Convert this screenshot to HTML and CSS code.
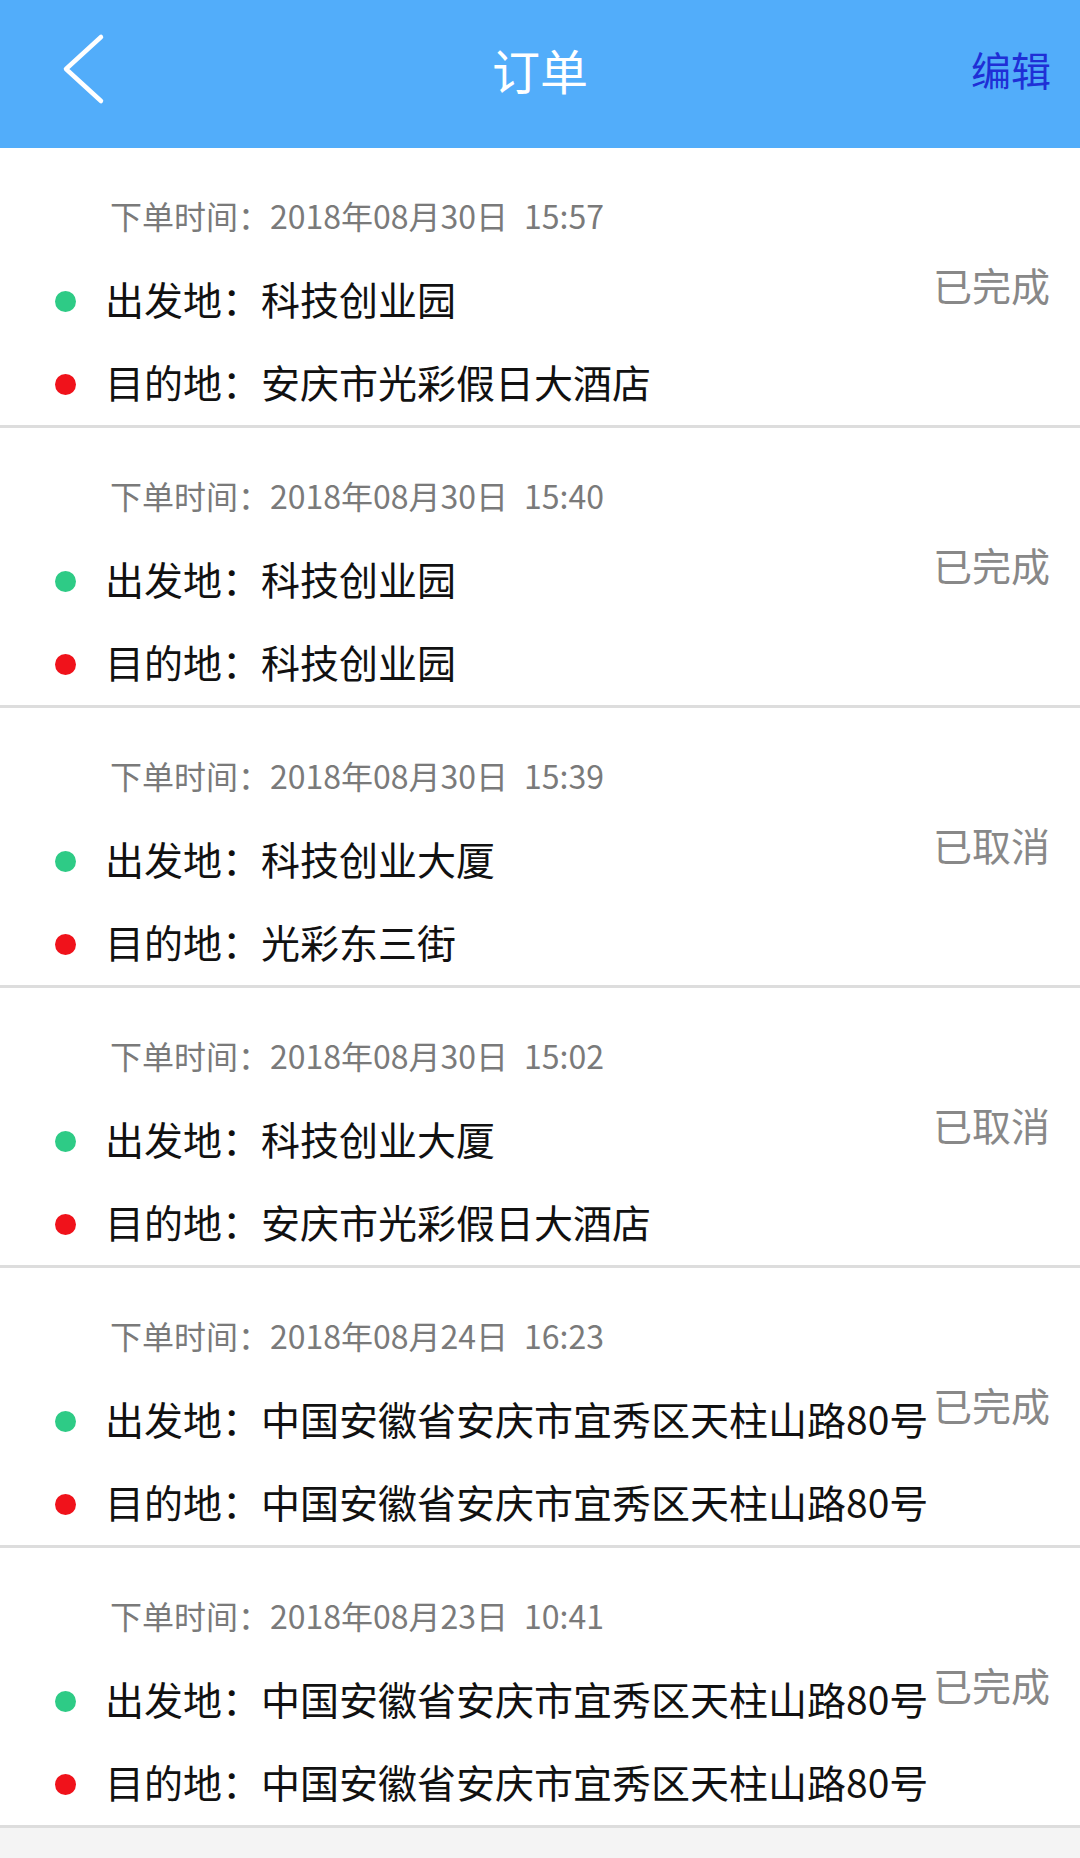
FILE: index.html
```html
<!DOCTYPE html>
<html lang="zh-CN">
<head>
<meta charset="utf-8">
<title>订单</title>
<link rel="stylesheet" href="styles.css">
</head>
<body>
<header class="topbar">
  <div class="topbar-left">
    <svg class="back-icon" width="44" height="72" viewBox="0 0 44 72" aria-hidden="true">
      <polyline points="39,4 4,36 39,68" fill="none" stroke="#ffffff" stroke-width="4.5" stroke-linecap="round" stroke-linejoin="round"/>
    </svg>
  </div>
  <div class="topbar-title">订单</div>
  <div class="topbar-right"><span class="edit-btn">编辑</span></div>
</header>

<main class="order-list">
  <div class="order">
    <div class="order-info">
      <div class="order-time">下单时间：2018年08月30日&ensp;15:57</div>
      <div class="loc"><span class="dot dot-start"></span>出发地：科技创业园</div>
      <div class="loc"><span class="dot dot-end"></span>目的地：安庆市光彩假日大酒店</div>
    </div>
    <div class="order-status">已完成</div>
  </div>

  <div class="order">
    <div class="order-info">
      <div class="order-time">下单时间：2018年08月30日&ensp;15:40</div>
      <div class="loc"><span class="dot dot-start"></span>出发地：科技创业园</div>
      <div class="loc"><span class="dot dot-end"></span>目的地：科技创业园</div>
    </div>
    <div class="order-status">已完成</div>
  </div>

  <div class="order">
    <div class="order-info">
      <div class="order-time">下单时间：2018年08月30日&ensp;15:39</div>
      <div class="loc"><span class="dot dot-start"></span>出发地：科技创业大厦</div>
      <div class="loc"><span class="dot dot-end"></span>目的地：光彩东三街</div>
    </div>
    <div class="order-status">已取消</div>
  </div>

  <div class="order">
    <div class="order-info">
      <div class="order-time">下单时间：2018年08月30日&ensp;15:02</div>
      <div class="loc"><span class="dot dot-start"></span>出发地：科技创业大厦</div>
      <div class="loc"><span class="dot dot-end"></span>目的地：安庆市光彩假日大酒店</div>
    </div>
    <div class="order-status">已取消</div>
  </div>

  <div class="order">
    <div class="order-info">
      <div class="order-time">下单时间：2018年08月24日&ensp;16:23</div>
      <div class="loc"><span class="dot dot-start"></span>出发地：中国安徽省安庆市宜秀区天柱山路80号</div>
      <div class="loc"><span class="dot dot-end"></span>目的地：中国安徽省安庆市宜秀区天柱山路80号</div>
    </div>
    <div class="order-status">已完成</div>
  </div>

  <div class="order">
    <div class="order-info">
      <div class="order-time">下单时间：2018年08月23日&ensp;10:41</div>
      <div class="loc"><span class="dot dot-start"></span>出发地：中国安徽省安庆市宜秀区天柱山路80号</div>
      <div class="loc"><span class="dot dot-end"></span>目的地：中国安徽省安庆市宜秀区天柱山路80号</div>
    </div>
    <div class="order-status">已完成</div>
  </div>
</main>
</body>
</html>
```

FILE: styles.css
```css
html, body {
  margin: 0;
  padding: 0;
}

body {
  background: #f4f4f4;
  font-family: "Noto Sans CJK SC", "Noto Sans", sans-serif;
  color: #111111;
}

.topbar {
  height: 148px;
  box-sizing: border-box;
  padding-bottom: 10px;
  background: #52adfa;
  display: grid;
  grid-template-columns: 1fr auto 1fr;
  align-items: center;
}

.topbar-left {
  padding-left: 62px;
  display: flex;
  align-items: center;
}

.back-icon {
  display: block;
}

.topbar-title {
  color: #ffffff;
  font-size: 48px;
  line-height: 60px;
}

.topbar-right {
  display: flex;
  justify-content: flex-end;
  padding-right: 29px;
}

.edit-btn {
  color: #1f2fd6;
  font-size: 40px;
  line-height: 52px;
}

.order-list {
  background: #ffffff;
}

.order {
  height: 277px;
  border-bottom: 3px solid #dddddd;
  display: flex;
  align-items: center;
  padding: 0 30px 0 55px;
}

.order-info {
  flex: 1;
  min-width: 0;
  align-self: flex-start;
  padding-top: 26px;
  white-space: nowrap;
}

.order-time {
  height: 83px;
  line-height: 83px;
  padding-left: 55px;
  font-size: 32px;
  color: #7a7a7a;
}

.loc {
  height: 83px;
  display: flex;
  align-items: center;
  font-size: 39px;
  line-height: 83px;
  color: #111111;
}

.dot {
  width: 21px;
  height: 21px;
  border-radius: 50%;
  margin-right: 29px;
  margin-top: 5px;
  flex: none;
}

.dot-start {
  background: #2ecb86;
}

.dot-end {
  background: #f0121b;
}

.order-status {
  flex: none;
  font-size: 39px;
  line-height: 50px;
  color: #888888;
  margin-top: -5px;
}
```
